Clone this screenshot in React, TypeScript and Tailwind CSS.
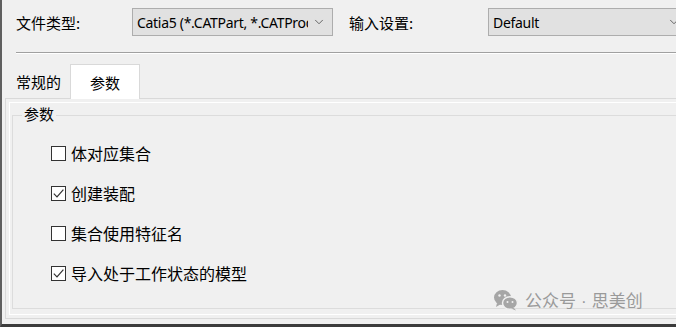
import { ChevronDown } from "lucide-react";

const cjk = "font-['Microsoft_YaHei','Noto_Sans_CJK_SC',sans-serif]";

const options = [
  { label: "体对应集合", checked: false },
  { label: "创建装配", checked: true },
  { label: "集合使用特征名", checked: false },
  { label: "导入处于工作状态的模型", checked: true },
];

function Check({ checked }: { checked: boolean }) {
  return (
    <span className="w-[15px] h-[15px] border border-[#333333] bg-white flex items-center justify-center shrink-0">
      {checked && (
        <svg width="13" height="13" viewBox="0 0 13 13">
          <path d="M1.8 6.6 L5 9.8 L11.4 2.6" fill="none" stroke="#333" strokeWidth="1.2" />
        </svg>
      )}
    </span>
  );
}

function Select({ text, width }: { text: string; width: string }) {
  return (
    <div className={`${width} h-[28px] shrink-0 bg-[#e1e1e1] border border-[#adadad] flex items-center pl-[4px] pr-[6px] gap-1`}>
      <span className="flex-1 overflow-hidden whitespace-nowrap text-[14px] text-black font-['Noto_Sans','Liberation_Sans',sans-serif] tracking-[-0.3px]">
        {text}
      </span>
      <ChevronDown className="w-[14px] h-[14px] text-[#555] shrink-0" strokeWidth={1.5} />
    </div>
  );
}

function WeChat() {
  return (
    <svg width="26" height="22" viewBox="0 0 26 22">
      <ellipse cx="9.5" cy="8.5" rx="8.5" ry="7.5" fill="#a6a6a6" />
      <path d="M4 14 L3 18 L8 15 Z" fill="#a6a6a6" />
      <ellipse cx="17" cy="14" rx="7.5" ry="6.3" fill="#a6a6a6" stroke="#f0f0f0" strokeWidth="1.5" />
      <path d="M21 19 L23 21.5 L18 19.5 Z" fill="#a6a6a6" />
      <circle cx="6.5" cy="6.5" r="1.2" fill="#f0f0f0" />
      <circle cx="12" cy="6.5" r="1.2" fill="#f0f0f0" />
      <circle cx="14.5" cy="13" r="1" fill="#f0f0f0" />
      <circle cx="19.5" cy="13" r="1" fill="#f0f0f0" />
    </svg>
  );
}

export default function App() {
  return (
    <div className={`relative w-[676px] h-[327px] overflow-hidden bg-[#f0f0f0] border-l-2 border-l-[#5f5f5f] border-b-[3px] border-b-[#3c3c3c] text-[15px] text-black ${cjk}`}>
      {/* top row */}
      <div className="flex items-center pt-[8px] h-[36px]">
        <span className="w-[130px] shrink-0 pl-[14px] leading-none">文件类型:</span>
        <Select text="Catia5 (*.CATPart, *.CATProduct)" width="w-[201px]" />
        <span className="w-[155px] shrink-0 pl-[16px] leading-none">输入设置:</span>
        <Select text="Default" width="w-[200px]" />
      </div>

      <div className="ml-[14px] mt-[16px] border-t border-t-[#a0a0a0] border-b border-b-white" />

      {/* tabs */}
      <div className="flex items-end mt-[9px] pl-[4px] h-[35px]">
        <div className="w-[64px] h-[33px] flex items-center pl-[10px] leading-none">常规的</div>
        <div className="w-[70px] h-[35px] bg-white border border-[#d9d9d9] border-b-0 flex items-center justify-center leading-none -mb-px relative z-10">
          参数
        </div>
      </div>

      {/* panel */}
      <div className="ml-[3px] h-[221px] border border-[#d9d9d9] border-r-0 p-[3px] pr-0">
        <div className="h-full border border-white border-r-0 pt-[12px] pl-[2px]">
          <div className="relative h-[194px] border border-[#dcdcdc] border-r-0 pt-[17px]">
            <span className="absolute -top-[10px] left-[9px] px-[2px] bg-[#f0f0f0] leading-none">参数</span>
            <div className="flex flex-col pl-[38px]">
              {options.map((o) => (
                <label key={o.label} className="flex items-center gap-[5px] h-[40px] leading-none">
                  <Check checked={o.checked} />
                  <span className="text-[16px]">{o.label}</span>
                </label>
              ))}
            </div>
          </div>
        </div>
      </div>

      {/* watermark */}
      <div className="absolute left-[491px] top-[289px] flex items-center gap-[6px] text-[#9a9a9a] text-[17px] leading-none">
        <WeChat />
        <span>
          公众号<span className="font-['Liberation_Sans',sans-serif] px-[5px]">·</span>思美创
        </span>
      </div>
    </div>
  );
}
